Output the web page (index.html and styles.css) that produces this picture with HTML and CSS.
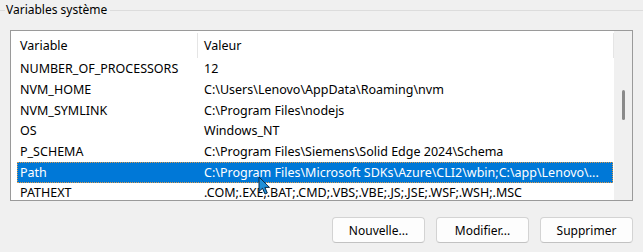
FILE: index.html
```html
<!DOCTYPE html>
<html lang="fr">
<head>
<meta charset="utf-8">
<title>Variables système</title>
<link rel="stylesheet" href="styles.css">
</head>
<body>
<div class="panel">
  <div class="group-title">
    <span class="line-start"></span>
    <span class="title-text">Variables système</span>
    <span class="line-rest"></span>
  </div>
  <div class="listbox">
    <div class="list-content">
      <div class="list-header">
        <div class="hcell hcell-name">Variable</div>
        <div class="hcell hcell-value">Valeur</div>
      </div>
      <div class="row"><div class="cell-name">NUMBER_OF_PROCESSORS</div><div class="cell-value">12</div></div>
      <div class="row"><div class="cell-name">NVM_HOME</div><div class="cell-value">C:\Users\Lenovo\AppData\Roaming\nvm</div></div>
      <div class="row"><div class="cell-name">NVM_SYMLINK</div><div class="cell-value">C:\Program Files\nodejs</div></div>
      <div class="row"><div class="cell-name">OS</div><div class="cell-value">Windows_NT</div></div>
      <div class="row"><div class="cell-name">P_SCHEMA</div><div class="cell-value">C:\Program Files\Siemens\Solid Edge 2024\Schema</div></div>
      <div class="row selected"><div class="cell-name">Path</div><div class="cell-value">C:\Program Files\Microsoft SDKs\Azure\CLI2\wbin;C:\app\Lenovo\...</div></div>
      <div class="row"><div class="cell-name">PATHEXT</div><div class="cell-value">.COM;.EXE;.BAT;.CMD;.VBS;.VBE;.JS;.JSE;.WSF;.WSH;.MSC</div></div>
    </div>
    <div class="scrollbar">
      <div class="thumb"></div>
    </div>
  </div>
  <div class="buttons">
    <button class="btn">Nouvelle...</button>
    <button class="btn">Modifier...</button>
    <button class="btn">Supprimer</button>
  </div>
  <svg class="cursor" width="14" height="20" viewBox="0 0 14 20">
    <path d="M1 1 L1 15.5 L4.5 12.3 L7 18 L9.3 17 L6.9 11.4 L11.5 11.4 Z" fill="#1f8fd8" stroke="#0b2a4a" stroke-width="1" stroke-linejoin="round"/>
  </svg>
</div>
</body>
</html>
```
FILE: styles.css
```css
html, body {
  margin: 0;
  padding: 0;
  background: #f0f0f0;
}
body {
  font-family: "Noto Sans", "Open Sans", sans-serif;
  font-size: 12px;
  color: #000;
}
.panel {
  position: relative;
  width: 643px;
  height: 252px;
  overflow: hidden;
}
.group-title {
  display: flex;
  align-items: center;
  height: 20px;
}
.line-start {
  width: 5px;
  height: 1px;
  background: #dcdcdc;
}
.title-text {
  padding: 0 3px 0 1px;
  line-height: 20px;
}
.line-rest {
  flex: 1;
  height: 1px;
  background: #dcdcdc;
}
.listbox {
  display: flex;
  margin: 10px 0 0 10px;
  width: 621px;
  height: 169px;
  border: 1px solid #9a9a9a;
  background: #fff;
  overflow: hidden;
  font-size: 12.5px;
}
.list-content {
  flex: 1;
  overflow: hidden;
}
.list-header {
  display: flex;
  height: 27.67px;
  align-items: stretch;
}
.hcell {
  display: flex;
  align-items: center;
}
.hcell-name {
  width: 177px;
  padding-left: 9px;
  border-right: 1px solid #e5e5e5;
  margin: 2px 0 1px 0;
}
.hcell-value {
  flex: 1;
  padding-left: 6px;
  border-right: 1px solid #e5e5e5;
  margin: 2px 0 1px 0;
}
.row {
  display: flex;
  height: 20.67px;
  align-items: center;
  margin: 0 1px 0 6px;
  white-space: nowrap;
}
.cell-name {
  width: 177px;
  padding-left: 3px;
}
.cell-value {
  flex: 1;
  padding-left: 7px;
  overflow: hidden;
}
.row.selected {
  background: #0078d7;
  color: #fff;
  outline: 1px dotted #d99a4e;
  outline-offset: -1px;
}
.scrollbar {
  width: 18px;
  background: #f0f0f0;
  position: relative;
}
.thumb {
  margin: 59px 0 0 8px;
  width: 3px;
  height: 30px;
  border-radius: 2px;
  background: #8a8a8a;
}
.buttons {
  display: flex;
  justify-content: flex-end;
  gap: 11px;
  padding-right: 10px;
  margin-top: 16px;
}
.btn {
  width: 93px;
  height: 26px;
  font-family: inherit;
  font-size: 12px;
  color: #000;
  background: #fdfdfd;
  border: 1px solid #d3d3d3;
  border-bottom-color: #c2c2c2;
  border-radius: 4px;
  padding: 0;
}
.cursor {
  position: absolute;
  left: 258px;
  top: 176px;
}
```
